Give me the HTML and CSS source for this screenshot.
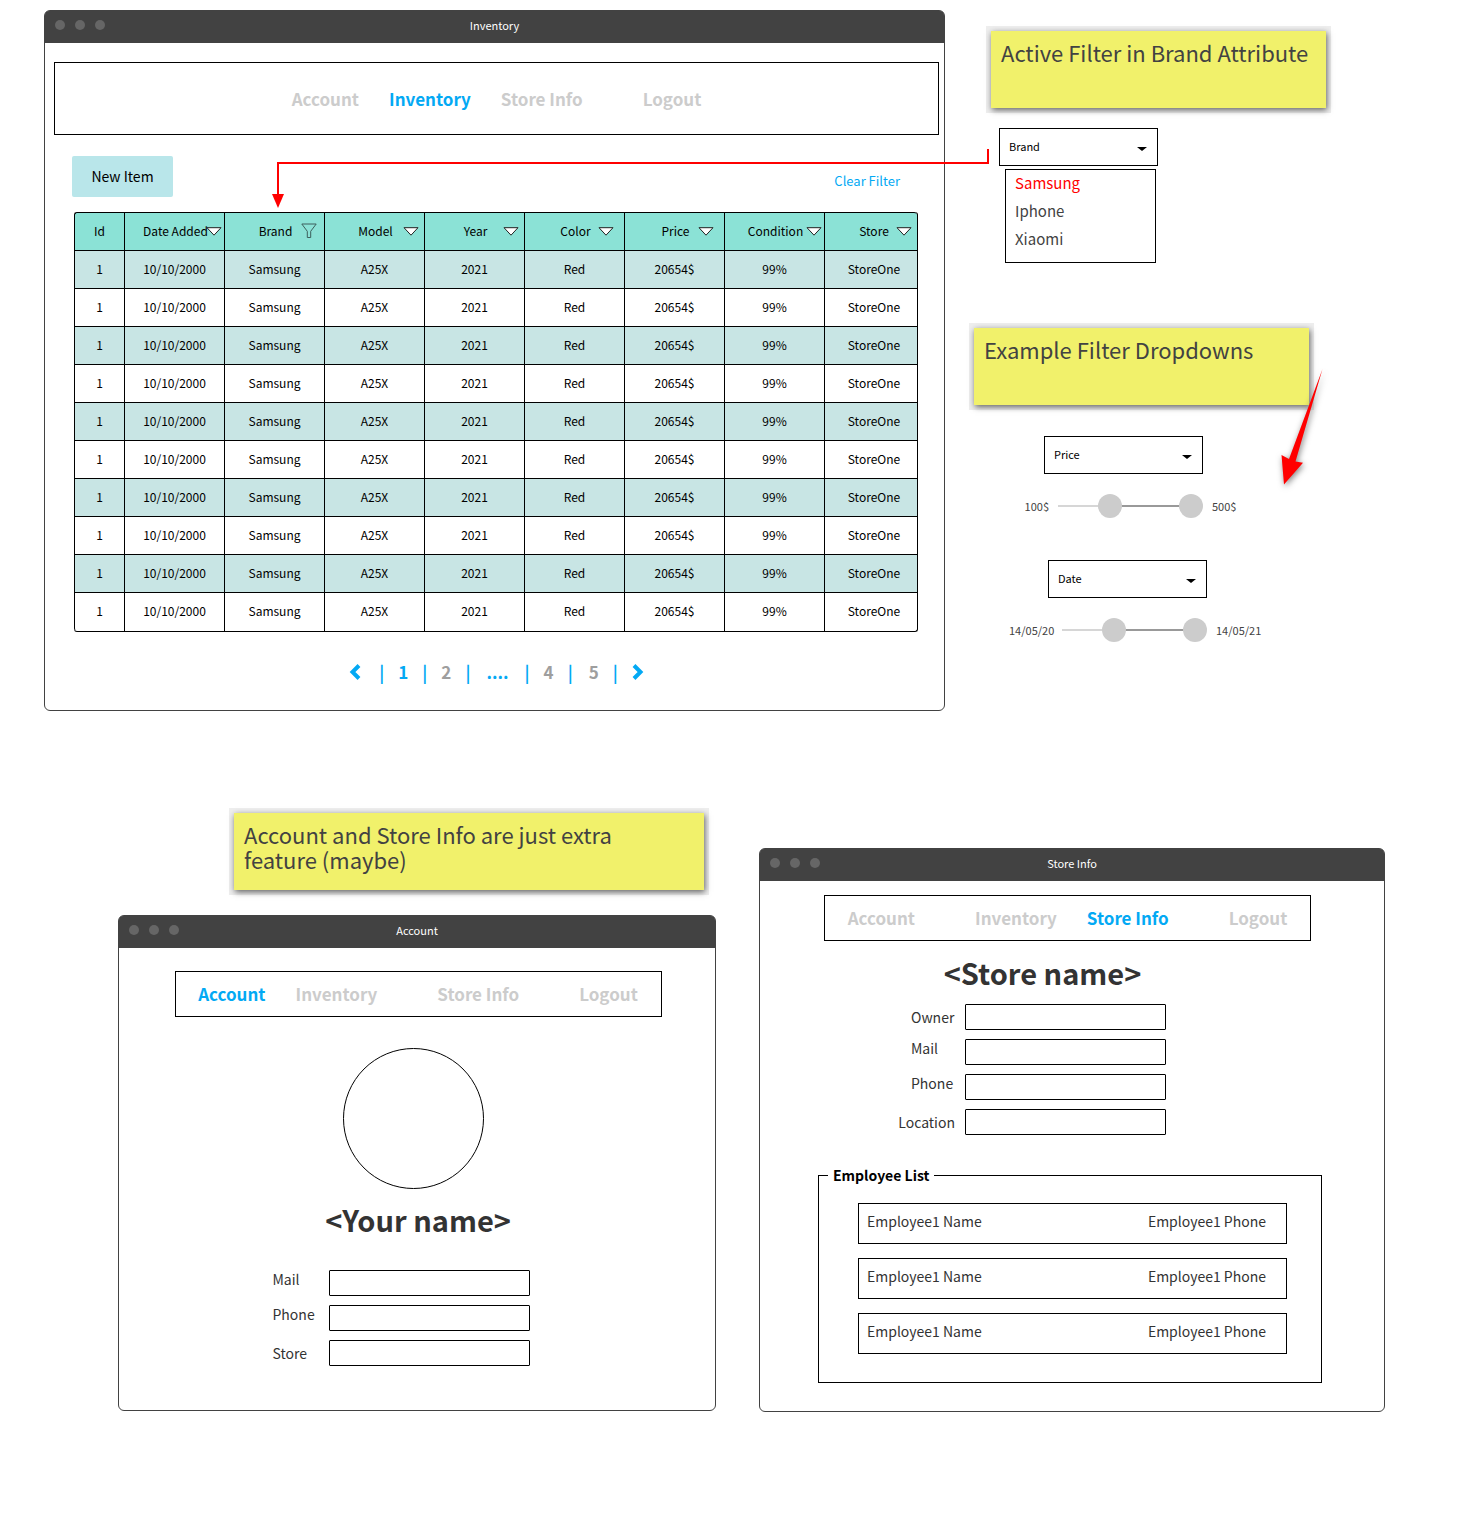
FILE: index.html
```html
<!DOCTYPE html>
<html lang="en">
<head>
<meta charset="utf-8">
<meta name="viewport" content="width=device-width, initial-scale=1">
<title>Inventory wireframes</title>
<link rel="stylesheet" href="styles.css">
</head>
<body>
<svg class="sprite" aria-hidden="true">
  <symbol id="icon-sort" viewBox="0 0 16 9"><path d="M1 .7h14L8 8.2z" fill="#fff" stroke="#222" stroke-width="1"/></symbol>
  <symbol id="icon-funnel" viewBox="0 0 16 16"><path d="M.8 1h14.4L9.7 8.300v6.200H6.300V8.300z" fill="none" stroke="#3d5f5c" stroke-width="1"/></symbol>
</svg>
<main class="board">
  <div class="top-row">
    <section class="window">
      <header class="titlebar"><span class="dots"><i></i><i></i><i></i></span><h2 class="title">Inventory</h2></header>
      <div class="inventory">
        <nav class="menu menu-tall">
          <a href="#account">Account</a>
          <a href="#inventory" class="active">Inventory</a>
          <a href="#store">Store Info</a>
          <a href="#logout" class="apart">Logout</a>
        </nav>
        <div class="toolbar">
          <button class="new-item" type="button">New Item</button>
          <a class="clear" href="#clear">Clear Filter</a>
        </div>
        <div class="table-wrap">
          <table class="items">
            <colgroup><col class="col-id"><col class="col"><col class="col"><col class="col"><col class="col"><col class="col"><col class="col"><col class="col"><col class="col-store"></colgroup>
            <thead>
              <tr>
                <th>Id</th>
                <th>Date Added<button class="sort edge" type="button" aria-label="Filter date"><svg><use href="#icon-sort"/></svg></button></th>
                <th>Brand<button class="sort funnel" type="button" aria-label="Filter brand"><svg><use href="#icon-funnel"/></svg></button></th>
                <th>Model<button class="sort" type="button" aria-label="Filter model"><svg><use href="#icon-sort"/></svg></button></th>
                <th>Year<button class="sort" type="button" aria-label="Filter year"><svg><use href="#icon-sort"/></svg></button></th>
                <th>Color<button class="sort inset" type="button" aria-label="Filter color"><svg><use href="#icon-sort"/></svg></button></th>
                <th>Price<button class="sort inset" type="button" aria-label="Filter price"><svg><use href="#icon-sort"/></svg></button></th>
                <th>Condition<button class="sort edge" type="button" aria-label="Filter condition"><svg><use href="#icon-sort"/></svg></button></th>
                <th>Store<button class="sort" type="button" aria-label="Filter store"><svg><use href="#icon-sort"/></svg></button></th>
              </tr>
            </thead>
            <tbody>
              <tr><td>1</td><td>10/10/2000</td><td>Samsung</td><td>A25X</td><td>2021</td><td>Red</td><td>20654$</td><td>99%</td><td>StoreOne</td></tr>
              <tr><td>1</td><td>10/10/2000</td><td>Samsung</td><td>A25X</td><td>2021</td><td>Red</td><td>20654$</td><td>99%</td><td>StoreOne</td></tr>
              <tr><td>1</td><td>10/10/2000</td><td>Samsung</td><td>A25X</td><td>2021</td><td>Red</td><td>20654$</td><td>99%</td><td>StoreOne</td></tr>
              <tr><td>1</td><td>10/10/2000</td><td>Samsung</td><td>A25X</td><td>2021</td><td>Red</td><td>20654$</td><td>99%</td><td>StoreOne</td></tr>
              <tr><td>1</td><td>10/10/2000</td><td>Samsung</td><td>A25X</td><td>2021</td><td>Red</td><td>20654$</td><td>99%</td><td>StoreOne</td></tr>
              <tr><td>1</td><td>10/10/2000</td><td>Samsung</td><td>A25X</td><td>2021</td><td>Red</td><td>20654$</td><td>99%</td><td>StoreOne</td></tr>
              <tr><td>1</td><td>10/10/2000</td><td>Samsung</td><td>A25X</td><td>2021</td><td>Red</td><td>20654$</td><td>99%</td><td>StoreOne</td></tr>
              <tr><td>1</td><td>10/10/2000</td><td>Samsung</td><td>A25X</td><td>2021</td><td>Red</td><td>20654$</td><td>99%</td><td>StoreOne</td></tr>
              <tr><td>1</td><td>10/10/2000</td><td>Samsung</td><td>A25X</td><td>2021</td><td>Red</td><td>20654$</td><td>99%</td><td>StoreOne</td></tr>
              <tr><td>1</td><td>10/10/2000</td><td>Samsung</td><td>A25X</td><td>2021</td><td>Red</td><td>20654$</td><td>99%</td><td>StoreOne</td></tr>
            </tbody>
          </table>
          <div class="connector"></div>
        </div>
        <nav class="pages" aria-label="Pages">
          <a href="#prev" class="step" aria-label="Previous"><svg viewBox="0 0 12 16"><path d="M10 1.500L3.500 8L10 14.500" fill="none" stroke="#03a9f4" stroke-width="4"/></svg></a>
          <span class="bar">|</span><a href="#p1" class="current">1</a>
          <span class="bar">|</span><a href="#p2">2</a>
          <span class="bar">|</span><span class="more">....</span>
          <span class="bar">|</span><a href="#p4">4</a>
          <span class="bar">|</span><a href="#p5" class="last">5</a>
          <span class="bar">|</span>
          <a href="#next" class="step" aria-label="Next"><svg viewBox="0 0 12 16"><path d="M2 1.500L8.500 8L2 14.500" fill="none" stroke="#03a9f4" stroke-width="4"/></svg></a>
        </nav>
      </div>
    </section>

    <aside class="notes">
      <section class="brand-filter">
        <p class="note">Active Filter in Brand Attribute</p>
        <select class="picker" aria-label="Brand"><option>Brand</option></select>
        <ul class="options">
          <li><button type="button" class="chosen">Samsung</button></li>
          <li><button type="button">Iphone</button></li>
          <li><button type="button">Xiaomi</button></li>
        </ul>
      </section>
      <section class="filter-examples">
        <p class="note">Example Filter Dropdowns</p>
        <svg class="pointer" viewBox="0 0 60 130" aria-hidden="true"><path d="M48.500 4L21.500 96.500L29 97.700L10 119.500L7.500 90L15 94z" fill="red"/></svg>
        <div class="example">
          <select class="picker" aria-label="Price"><option>Price</option></select>
          <div class="range-row">
            <span class="bound">100$</span>
            <div class="range"><input type="range" value="33" aria-label="Lowest price"><input type="range" value="100" aria-label="Highest price"></div>
            <span class="bound">500$</span>
          </div>
        </div>
        <div class="example example-date">
          <select class="picker" aria-label="Date"><option>Date</option></select>
          <div class="range-row">
            <span class="bound">14/05/20</span>
            <div class="range"><input type="range" value="33" aria-label="Earliest date"><input type="range" value="100" aria-label="Latest date"></div>
            <span class="bound">14/05/21</span>
          </div>
        </div>
      </section>
    </aside>
  </div>

  <div class="bottom-row">
    <div class="account-side">
      <p class="note note-wide">Account and Store Info are just extra feature (maybe)</p>
      <section class="window">
        <header class="titlebar"><span class="dots"><i></i><i></i><i></i></span><h2 class="title">Account</h2></header>
        <div class="account">
          <nav class="menu">
            <a href="#account" class="active">Account</a>
            <a href="#inventory">Inventory</a>
            <a href="#store" class="apart">Store Info</a>
            <a href="#logout" class="apart">Logout</a>
          </nav>
          <div class="avatar"></div>
          <h1 class="name">&lt;Your name&gt;</h1>
          <form class="fields">
            <label for="a-mail" class="raised">Mail</label><input id="a-mail" type="email">
            <label for="a-phone" class="raised">Phone</label><input id="a-phone" type="tel">
            <label for="a-store">Store</label><input id="a-store" type="text">
          </form>
        </div>
      </section>
    </div>
    <section class="window store-window">
      <header class="titlebar"><span class="dots"><i></i><i></i><i></i></span><h2 class="title">Store Info</h2></header>
      <div class="store">
        <nav class="menu">
          <a href="#account">Account</a>
          <a href="#inventory" class="apart">Inventory</a>
          <a href="#store" class="active">Store Info</a>
          <a href="#logout" class="apart">Logout</a>
        </nav>
        <h1 class="name">&lt;Store name&gt;</h1>
        <form class="fields store-fields">
          <label for="s-owner">Owner</label><input id="s-owner" type="text">
          <label for="s-mail" class="raised">Mail</label><input id="s-mail" type="email">
          <label for="s-phone" class="raised">Phone</label><input id="s-phone" type="tel">
          <label for="s-location">Location</label><input id="s-location" type="text">
        </form>
        <fieldset class="employees">
          <legend>Employee List</legend>
          <ul>
            <li><span>Employee1 Name</span><span>Employee1 Phone</span></li>
            <li><span>Employee1 Name</span><span>Employee1 Phone</span></li>
            <li><span>Employee1 Name</span><span>Employee1 Phone</span></li>
          </ul>
        </fieldset>
      </div>
    </section>
  </div>
</main>
</body>
</html>
```
FILE: styles.css
```css
* { box-sizing: border-box; }

body {
  margin: 0;
  background: #fff;
  color: #333;
  font-family: "Noto Sans CJK SC", "Noto Sans", sans-serif;
  font-size: 14px;
  line-height: 20px;
}

button, input, select { font: inherit; color: inherit; }
button { padding: 0; border: 0; background: none; cursor: pointer; }
a { text-decoration: none; }
h1, h2, p, ul { margin: 0; padding: 0; }
ul { list-style: none; }
.sprite { display: none; }

.board { padding: 10px 0 120px; }

.top-row {
  display: grid;
  grid-template-columns: minmax(0, 1fr) 523px;
  align-items: start;
  padding-left: 44px;
}

.bottom-row {
  display: grid;
  grid-template-columns: minmax(0, 598fr) minmax(0, 626fr);
  gap: 43px;
  margin-top: 102px;
  padding: 0 83px 0 118px;
}

/* Windows */
.window {
  border: 1px solid #424242;
  border-radius: 6px;
  background: #fff;
}

.titlebar {
  display: grid;
  grid-template-columns: 1fr auto 1fr;
  align-items: center;
  height: 32px;
  padding: 0 10px 2px;
  border-radius: 4px 4px 0 0;
  background: #424242;
}

.dots { display: flex; gap: 10px; padding-bottom: 2px; }
.dots i { width: 10px; height: 10px; border-radius: 50%; background: #666; }
.title { padding-bottom: 2px; color: #fff; font-size: 11px; font-weight: 400; line-height: 16px; }

/* Menus */
.menu {
  display: flex;
  justify-content: center;
  align-items: center;
  gap: 30px;
  width: 487px;
  max-width: 100%;
  height: 46px;
  border: 1px solid #000;
  font-size: 17px;
  font-weight: 700;
}

.menu-tall { width: auto; height: 73px; }
.menu a { color: #ccc; }
.menu .active { color: #03a9f4; }
.menu .apart { margin-left: 30px; }

/* Inventory */
.inventory { padding: 19px 5px 28px 9px; }

.toolbar {
  display: flex;
  justify-content: space-between;
  align-items: center;
  margin: 21px 39px 15px 18px;
}

.new-item {
  width: 101px;
  height: 41px;
  padding-bottom: 2px;
  border-radius: 2px;
  background: #b9e6ea;
  color: #000;
}

.clear { padding-top: 8px; color: #03a9f4; font-size: 13px; }
.table-wrap { position: relative; margin: 0 21px 0 20px; }

.items {
  width: 100%;
  table-layout: fixed;
  border-spacing: 0;
  border: 1px solid #000;
  border-width: 0 1px 1px 0;
  border-radius: 3px;
  color: #000;
  font-size: 12px;
  text-align: center;
}

.col-id { width: 50px; }
.col { width: 100px; }
.col-store { width: 93px; }

.items th, .items td {
  height: 38px;
  padding: 0 0 2px;
  border: 1px solid #000;
  border-width: 1px 0 0 1px;
  font-weight: 400;
}

.items th { position: relative; background: #8be2d6; }
.items th + th { padding-left: 2px; }
.items th:last-child, .items td:last-child { padding-left: 6px; }
.items tbody tr:nth-child(odd) { background: #c8e5e4; }
.items th:first-child { border-top-left-radius: 3px; }
.items th:last-child { border-top-right-radius: 3px; }
.items tbody tr:last-child td { height: 39px; }
.items tbody tr:last-child td:first-child { border-bottom-left-radius: 3px; }

.sort {
  position: absolute;
  top: 14px;
  right: 5px;
  width: 16px;
  height: 9px;
}

.sort svg { display: block; width: 100%; height: 100%; }
.sort.edge { right: 2px; }
.sort.inset { right: 10px; }
.sort.funnel { top: 10px; right: 7px; height: 16px; }

/* Line from the brand drop-down to the brand column */
.connector {
  position: absolute;
  top: -50px;
  left: 24%;
  right: -71px;
  height: 34px;
  border: solid red;
  border-width: 2px 0 0 2px;
  pointer-events: none;
}

.connector::before {
  content: "";
  position: absolute;
  left: -7px;
  bottom: -12px;
  border: 6px solid transparent;
  border-top: 14px solid red;
  border-bottom: 0;
}

.connector::after {
  content: "";
  position: absolute;
  right: 0;
  bottom: 100%;
  width: 2px;
  height: 15px;
  background: red;
}

.pages {
  display: flex;
  justify-content: center;
  align-items: center;
  gap: 14px;
  margin-top: 30px;
  font-size: 17px;
  font-weight: 700;
}

.pages a { color: #9e9e9e; }
.pages .current, .pages .bar, .pages .more { color: #03a9f4; }
.pages .more { padding: 0 2px; }
.pages .last { padding-left: 2px; }
.step svg { display: block; width: 12px; height: 16px; }
.step:first-child { padding-right: 4px; }

/* Notes */
.note {
  width: 335px;
  min-height: 77px;
  padding: 9px 10px;
  background: #f1f16b;
  box-shadow: 1px 2px 6px rgba(0, 0, 0, .6), 0 0 0 5px #eee;
  color: #424242;
  font-size: 22px;
  line-height: 25px;
}

.note-wide { width: 470px; margin-left: 116px; padding-right: 60px; }
.brand-filter { padding: 21px 0 0 46px; }

.picker {
  appearance: none;
  display: block;
  width: 159px;
  height: 38px;
  padding: 0 9px 2px;
  border: 1px solid #000;
  border-radius: 0;
  background: #fff url("data:image/svg+xml,%3Csvg xmlns='http://www.w3.org/2000/svg' width='10' height='4'%3E%3Cpath d='M0 0h10L5 4z'/%3E%3C/svg%3E") no-repeat right 10px top 18px;
  color: #000;
  font-size: 11px;
}

.brand-filter .picker { margin: 20px 0 3px 8px; }

.options {
  width: 151px;
  height: 94px;
  margin-left: 14px;
  padding-left: 9px;
  border: 1px solid #000;
  font-size: 15px;
  line-height: 26px;
}

.options button { display: block; padding-bottom: 2px; color: #424242; }
.options .chosen { color: red; }

.filter-examples { position: relative; padding: 65px 0 0 29px; }

.pointer {
  position: absolute;
  top: 102px;
  left: 329px;
  width: 60px;
  height: 130px;
  filter: drop-shadow(1px 2px 3px rgba(0, 0, 0, .5));
}

.example { width: 260px; margin: 31px 0 0 31px; }
.example .picker { margin-left: 39px; }
.example-date { margin: 42px 0 0 35px; }

.range-row {
  display: flex;
  align-items: center;
  gap: 9px;
  margin-top: 20px;
}

.bound { flex: none; width: 44px; color: #424242; font-size: 11px; }
.bound:first-child { text-align: right; }

.range {
  display: grid;
  flex: none;
  width: 145px;
  height: 24px;
  background:
    linear-gradient(#999, #999) no-repeat 52px 11px / 80px 2px,
    linear-gradient(#d6d6d6, #d6d6d6) no-repeat 0 11px / 52px 2px;
}

.range input {
  appearance: none;
  grid-area: 1 / 1;
  width: 100%;
  height: 24px;
  margin: 0;
  background: none;
  pointer-events: none;
}

.range input::-webkit-slider-thumb {
  appearance: none;
  width: 24px;
  height: 24px;
  border-radius: 50%;
  background: #ccc;
  pointer-events: auto;
}

.range input::-moz-range-thumb {
  width: 24px;
  height: 24px;
  border: 0;
  border-radius: 50%;
  background: #ccc;
  pointer-events: auto;
}

/* Account and store */
.account-side { display: flex; flex-direction: column; gap: 25px; }
.store-window { margin-top: 35px; }

.account, .store {
  display: flex;
  flex-direction: column;
  align-items: center;
}

.account { padding: 23px 0 44px 2px; }
.store { padding: 14px 9px 28px 0; }

.avatar {
  width: 141px;
  height: 141px;
  margin: 31px 9px 0 0;
  border: 1px solid #000;
  border-radius: 50%;
}

.name { font-size: 29px; line-height: 36px; }
.account .name { margin-top: 12px; }
.store .name { margin: 13px 50px 0 0; }

.fields {
  display: grid;
  grid-template-columns: 56px 201px;
  align-items: center;
  row-gap: 9px;
  margin: 33px 34px 0 0;
}

.fields label { min-width: 44px; line-height: 18px; }
.fields .raised { align-self: start; }

.fields input {
  width: 100%;
  height: 26px;
  padding: 0 6px;
  border: 1px solid #000;
  border-radius: 1px;
  background: #fff;
}

.store-fields {
  grid-template-columns: 60px 201px;
  column-gap: 10px;
  margin: 14px 74px 0 0;
}

.store-fields label { justify-self: end; }

.employees {
  width: 504px;
  max-width: 100%;
  margin: 30px 0 0 5px;
  padding: 0 34px 28px 39px;
  border: 1px solid #000;
}

.employees legend {
  margin-left: -30px;
  padding: 0 5px;
  color: #000;
  font-weight: 700;
}

.employees ul { display: grid; gap: 14px; padding-top: 18px; }

.employees li {
  display: flex;
  justify-content: space-between;
  height: 41px;
  padding: 7px 20px 0 8px;
  border: 1px solid #000;
}
```
